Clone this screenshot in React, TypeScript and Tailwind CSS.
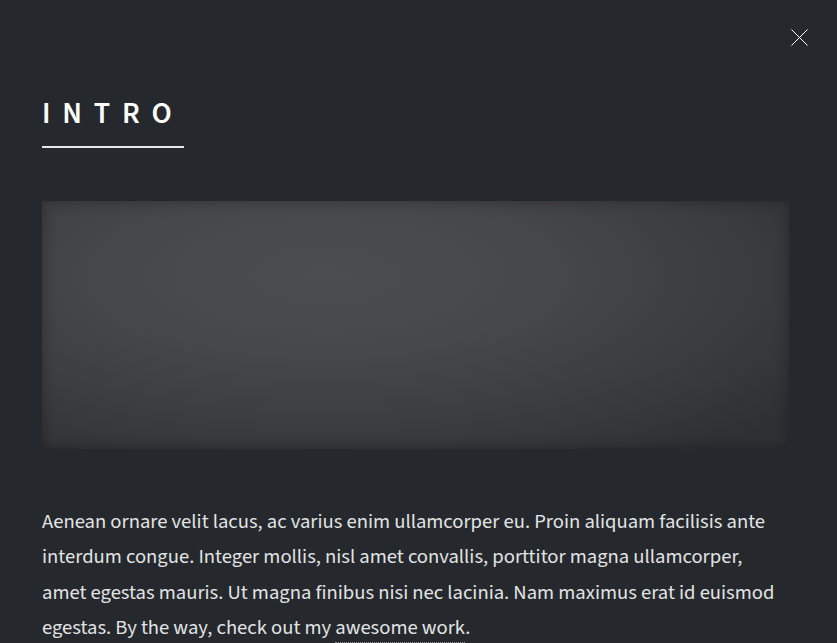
export default function App() {
  return (
    <div
      className="relative h-[643px] w-full overflow-hidden bg-[#25292d] pl-[42px] pr-[48px] pt-[91px] text-white"
      style={{ fontFamily: '"Source Sans 3", "Lato", sans-serif' }}
    >
      <button
        aria-label="Close"
        className="absolute right-[29px] top-[29px] flex h-[17px] w-[17px] items-center justify-center"
      >
        <svg width="17" height="17" viewBox="0 0 17 17" fill="none">
          <path d="M0.5 0.5 L16.5 16.5 M16.5 0.5 L0.5 16.5" stroke="#ffffff" strokeWidth="1" />
        </svg>
      </button>

      <div className="flex flex-col items-start">
        <h2 className="border-b-2 border-[#e6e7e8] pb-[10px] text-[30px] font-semibold uppercase leading-[45px] tracking-[11.8px] text-white">
          Intro
        </h2>
      </div>

      <div className="mt-[53px] h-[248px] w-[747px] bg-[radial-gradient(ellipse_80%_90%_at_38%_30%,#4c4d50_0%,#47484b_35%,#3b3c3e_70%,#2f3031_100%)] shadow-[inset_0_0_14px_rgba(0,0,0,0.3)]" />

      <p className="mt-[55px] w-[747px] text-[20.6px] font-normal leading-[35.4px] text-[#e2e3e4]">
        Aenean ornare velit lacus, ac varius enim ullamcorper eu. Proin aliquam facilisis ante
        interdum congue. Integer mollis, nisl amet convallis, porttitor magna ullamcorper,
        amet egestas mauris. Ut magna finibus nisi nec lacinia. Nam maximus erat id euismod
        egestas. By the way, check out my{" "}
        <a href="#" className="border-b border-dotted border-white/50 text-[#e2e3e4]">
          awesome work
        </a>
        .
      </p>
    </div>
  );
}
